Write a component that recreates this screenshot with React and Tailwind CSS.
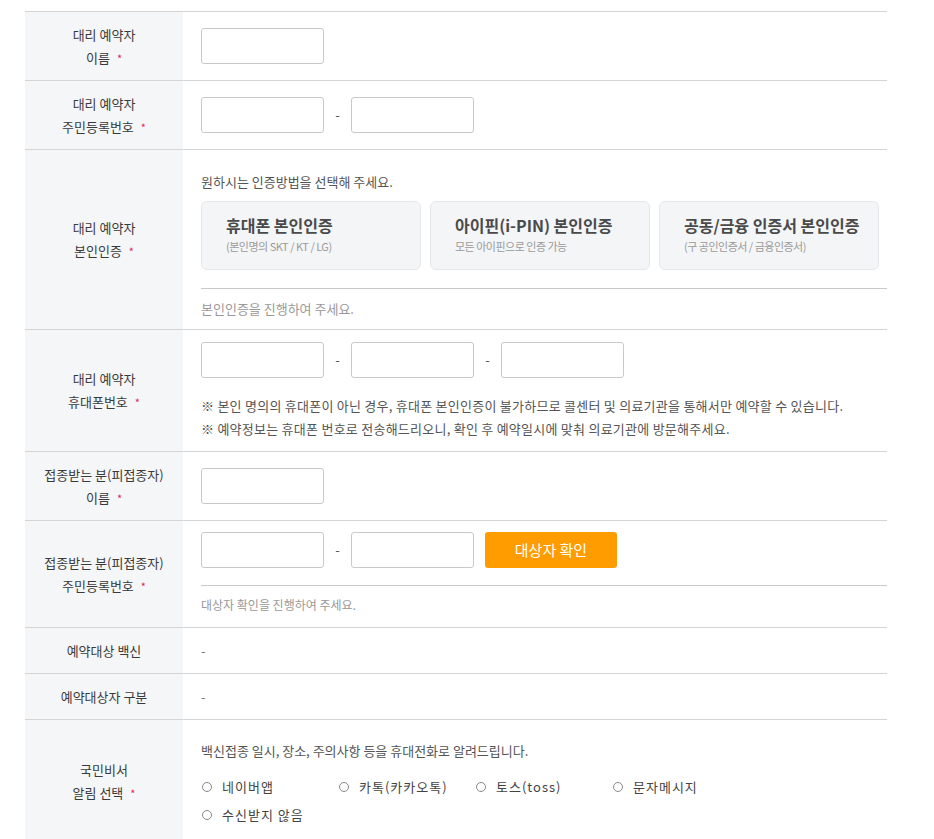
const FONT = { fontFamily: '"Noto Sans CJK KR", "Noto Sans", sans-serif' }

function Label({ lines }) {
  return (
    <div className="flex w-[158px] shrink-0 flex-col items-center justify-center bg-[#f5f6f8] text-center text-[13px] leading-[23px] text-[#3a3a3a]">
      {lines.map((line, i) => (
        <span key={i}>
          {line}
          {i === lines.length - 1 && <span className="ml-[7px] text-[11px] text-[#e1245a]">*</span>}
        </span>
      ))}
    </div>
  )
}

function PlainLabel({ text }) {
  return (
    <div className="flex w-[158px] shrink-0 items-center justify-center bg-[#f5f6f8] text-[13px] text-[#3a3a3a]">
      {text}
    </div>
  )
}

function Input() {
  return <input type="text" className="h-[36px] w-[123px] rounded-[3px] border border-[#c9c9c9] bg-white outline-none" />
}

function Dash() {
  return <span className="w-[27px] text-center text-[13px] text-[#555]">-</span>
}

function Row({ children, className = '' }) {
  return <div className={`flex border-b border-[#d5d5d5] ${className}`}>{children}</div>
}

const authBoxes = [
  { title: '휴대폰 본인인증', sub: '(본인명의 SKT / KT / LG)' },
  { title: '아이핀(i-PIN) 본인인증', sub: '모든 아이핀으로 인증 가능' },
  { title: '공동/금융 인증서 본인인증', sub: '(구 공인인증서 / 금융인증서)' },
]

const radios = ['네이버앱', '카톡(카카오톡)', '토스(toss)', '문자메시지', '수신받지 않음']

export default function App() {
  return (
    <div className="min-h-[839px] bg-white pt-[11px]" style={FONT}>
      <div className="ml-[25px] w-[862px] border-t border-[#d5d5d5]">
        <Row className="h-[69px]">
          <Label lines={['대리 예약자', '이름']} />
          <div className="flex items-center pl-[18px]">
            <Input />
          </div>
        </Row>

        <Row className="h-[69px]">
          <Label lines={['대리 예약자', '주민등록번호']} />
          <div className="flex items-center pl-[18px]">
            <Input />
            <Dash />
            <Input />
          </div>
        </Row>

        <Row className="h-[180px]">
          <Label lines={['대리 예약자', '본인인증']} />
          <div className="flex-1 pl-[18px]">
            <p className="mt-[22px] text-[13px] leading-[20px] text-[#555]">원하시는 인증방법을 선택해 주세요.</p>
            <div className="mt-[9px] flex gap-[9px]">
              {authBoxes.map((box) => (
                <div
                  key={box.title}
                  className="flex h-[69px] w-[220px] flex-col rounded-[6px] border border-[#e6e7ea] bg-[#f4f5f7] pl-[24px] pt-[13px]"
                >
                  <span className="text-[16px] font-semibold leading-[20px] text-[#4a4a4a]">{box.title}</span>
                  <span className="mt-[4px] text-[11px] leading-[14px] tracking-[-0.5px] text-[#9a9a9a]">{box.sub}</span>
                </div>
              ))}
            </div>
            <div className="mt-[18px] border-t border-[#c9c9c9]" />
            <p className="mt-[10px] text-[13px] leading-[20px] text-[#999]">본인인증을 진행하여 주세요.</p>
          </div>
        </Row>

        <Row className="h-[122px]">
          <Label lines={['대리 예약자', '휴대폰번호']} />
          <div className="flex-1 pl-[18px] pt-[12px]">
            <div className="flex items-center">
              <Input />
              <Dash />
              <Input />
              <Dash />
              <Input />
            </div>
            <div className="mt-[16px] text-[13px] leading-[23px] tracking-[0.25px] text-[#555]">
              <p>※ 본인 명의의 휴대폰이 아닌 경우, 휴대폰 본인인증이 불가하므로 콜센터 및 의료기관을 통해서만 예약할 수 있습니다.</p>
              <p>※ 예약정보는 휴대폰 번호로 전송해드리오니, 확인 후 예약일시에 맞춰 의료기관에 방문해주세요.</p>
            </div>
          </div>
        </Row>

        <Row className="h-[69px]">
          <Label lines={['접종받는 분(피접종자)', '이름']} />
          <div className="flex items-center pl-[18px]">
            <Input />
          </div>
        </Row>

        <Row className="h-[107px]">
          <Label lines={['접종받는 분(피접종자)', '주민등록번호']} />
          <div className="flex-1 pl-[18px] pt-[11px]">
            <div className="flex items-center">
              <Input />
              <Dash />
              <Input />
              <button
                type="button"
                className="ml-[11px] h-[36px] w-[132px] rounded-[3px] bg-[#ff9c00] text-[15px] text-white"
              >
                대상자 확인
              </button>
            </div>
            <div className="mt-[17px] border-t border-[#c9c9c9]" />
            <p className="mt-[9px] text-[12px] leading-[20px] text-[#999]">대상자 확인을 진행하여 주세요.</p>
          </div>
        </Row>

        <Row className="h-[46px]">
          <PlainLabel text="예약대상 백신" />
          <div className="flex items-center pl-[18px] text-[13px] text-[#777]">-</div>
        </Row>

        <Row className="h-[46px]">
          <PlainLabel text="예약대상자 구분" />
          <div className="flex items-center pl-[18px] text-[13px] text-[#777]">-</div>
        </Row>

        <div className="flex h-[122px]">
          <Label lines={['국민비서', '알림 선택']} />
          <div className="flex-1 pl-[18px] pt-[21px]">
            <p className="text-[13px] leading-[20px] text-[#555]">백신접종 일시, 장소, 주의사항 등을 휴대전화로 알려드립니다.</p>
            <div className="mt-[12px] flex w-[560px] flex-wrap">
              {radios.map((r) => (
                <label key={r} className="flex h-[28px] w-[137px] items-center text-[13px] text-[#444]">
                  <span className="ml-[1px] mr-[10px] inline-block h-[10px] w-[10px] rounded-full border border-[#888]" />
                  <span className="tracking-[1px]">{r}</span>
                </label>
              ))}
            </div>
          </div>
        </div>
      </div>
    </div>
  )
}
